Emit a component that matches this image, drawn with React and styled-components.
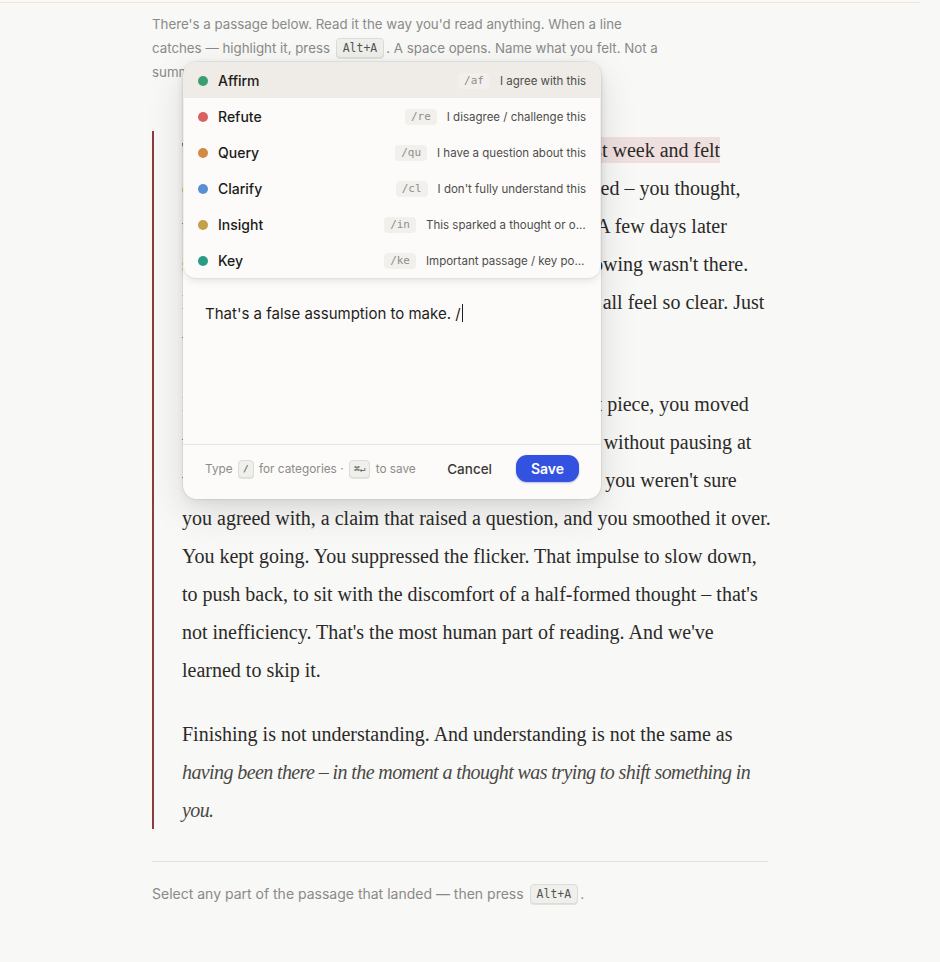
import React from "react";
import styled, { createGlobalStyle } from "styled-components";

const GlobalStyle = createGlobalStyle`
  html, body {
    margin: 0;
    padding: 0;
    background: #f8f8f6;
  }
  body {
    font-family: Inter, "Noto Sans", sans-serif;
    -webkit-font-smoothing: antialiased;
  }
`;

const categories = [
  { name: "Affirm", code: "/af", desc: "I agree with this", color: "#3b9e6f" },
  { name: "Refute", code: "/re", desc: "I disagree / challenge this", color: "#d9625f" },
  { name: "Query", code: "/qu", desc: "I have a question about this", color: "#d08c46" },
  { name: "Clarify", code: "/cl", desc: "I don't fully understand this", color: "#5b8fd5" },
  { name: "Insight", code: "/in", desc: "This sparked a thought or observation", color: "#c4a04b" },
  { name: "Key", code: "/ke", desc: "Important passage / key point", color: "#2c9a89" },
];

const Shell = styled.div`
  padding-right: 20px;
`;

const TopRule = styled.div`
  height: 1px;
  margin-top: 2px;
  background: #f4e2d5;
`;

const Page = styled.main`
  position: relative;
  max-width: 616px;
  margin: 0 auto;
  padding: 9px 12px 60px;
`;

const Intro = styled.p`
  margin: 0;
  max-width: 510px;
  font-size: 13.3px;
  line-height: 24px;
  color: #8a8a88;
`;

const Kbd = styled.kbd`
  display: inline-block;
  font-family: "DejaVu Sans Mono", "Liberation Mono", monospace;
  font-size: ${(p) => (p.$small ? "9.5px" : "11.5px")};
  line-height: ${(p) => (p.$small ? "16px" : "18px")};
  padding: 0 ${(p) => (p.$small ? "4px" : "6px")};
  margin: 0 2px;
  color: #555;
  background: #efefec;
  border: 1px solid #dcdcd8;
  border-radius: 4px;
  box-shadow: 0 1px 0 #e2e2de;
  vertical-align: 1px;
`;

/* the passage is typeset line by line, so each paragraph keeps its breaks */
const Passage = styled.article`
  margin-top: 47px;
  padding-left: 28px;
  border-left: 2px solid #8e3b3b;
  font-family: "Liberation Serif", "Times New Roman", serif;
  font-size: 20px;
  line-height: 38px;
  color: #2b2a28;
`;

const Para = styled.p`
  margin: 0 0 26px;
  white-space: nowrap;
  &:last-child {
    margin-bottom: 0;
  }
`;

const Marked = styled.span`
  background: #efe0df;
  padding: 2px 0;
`;

const Aside = styled.em`
  color: #4a4845;
  letter-spacing: -0.6px;
`;

const Divider = styled.hr`
  margin: 32px 0 0;
  border: 0;
  border-top: 1px solid #e3e3e0;
`;

const Footnote = styled.p`
  margin: 20px 0 0;
  font-size: 14px;
  line-height: 24px;
  color: #8a8a88;
`;

/* annotation popover */

const Popover = styled.div`
  position: absolute;
  top: 59px;
  left: 43px;
  width: 418px;
  background: #fcfbf9;
  border-radius: 14px;
  box-shadow: 0 0 0 1px rgba(0, 0, 0, 0.05), 0 12px 36px rgba(0, 0, 0, 0.13),
    0 3px 8px rgba(0, 0, 0, 0.05);
  z-index: 10;
`;

const Excerpt = styled.blockquote`
  margin: 0;
  height: 220px;
  padding: 18px 22px;
  box-sizing: border-box;
  font-family: "Liberation Serif", serif;
  font-style: italic;
  font-size: 15px;
  color: #777;
`;

const Menu = styled.ul`
  position: absolute;
  top: 0;
  left: 1px;
  right: 1px;
  margin: 0;
  padding: 0;
  list-style: none;
  background: #fcfbf9;
  border-radius: 12px;
  overflow: hidden;
  box-shadow: 0 3px 8px rgba(0, 0, 0, 0.09), 0 1px 2px rgba(0, 0, 0, 0.06);
`;

const MenuItem = styled.li`
  display: flex;
  align-items: center;
  height: 36px;
  padding: 1px 14px 0;
  box-sizing: border-box;
  background: ${(p) => (p.$active ? "#efebe6" : "transparent")};
`;

const Dot = styled.span`
  width: 10px;
  height: 10px;
  border-radius: 50%;
  background: ${(p) => p.$color};
  flex-shrink: 0;
`;

const ItemName = styled.span`
  margin-left: 10px;
  font-size: 14px;
  font-weight: 500;
  color: #1b1b1a;
`;

const ItemCode = styled.code`
  margin-left: auto;
  font-family: "DejaVu Sans Mono", "Liberation Mono", monospace;
  font-size: 11px;
  line-height: 16px;
  padding: 0 6px;
  color: #8f8e8a;
  background: #f2f0ec;
  border-radius: 4px;
`;

const ItemDesc = styled.span`
  margin-left: 10px;
  max-width: 160px;
  white-space: nowrap;
  overflow: hidden;
  text-overflow: ellipsis;
  font-size: 11.5px;
  color: #4e4d4a;
`;

const Editor = styled.div`
  height: 162px;
  padding: 21px 22px;
  box-sizing: border-box;
  font-size: 15px;
  line-height: 22px;
  color: #1e1e1d;
`;

const Caret = styled.span`
  display: inline-block;
  width: 1px;
  height: 18px;
  margin-left: 1px;
  background: #1e1e1d;
  vertical-align: -3px;
`;

const Footer = styled.div`
  display: flex;
  align-items: center;
  padding: 10px 22px 17px;
  border-top: 1px solid #e7e5e1;
`;

const Hint = styled.span`
  font-size: 11.8px;
  color: #8c8b88;
  margin-right: auto;
`;

const CancelButton = styled.button`
  border: 0;
  background: none;
  font-family: inherit;
  font-size: 13.5px;
  font-weight: 500;
  color: #3a3a38;
  padding: 0;
  margin-right: 24px;
  cursor: pointer;
`;

const SaveButton = styled.button`
  border: 0;
  height: 27px;
  width: 63px;
  border-radius: 11px;
  background: #3452e0;
  color: #fff;
  font-family: inherit;
  font-size: 14px;
  font-weight: 600;
  box-shadow: 0 1px 2px rgba(30, 50, 160, 0.3);
  cursor: pointer;
`;

export default function App() {
  return (
    <Shell>
      <GlobalStyle />
      <TopRule />
      <Page>
        <Intro>
          There's a passage below. Read it the way you'd read anything. When a line
          catches — highlight it, press <Kbd>Alt+A</Kbd>. A space opens. Name what you felt. Not a
          summary. Just the first honest reaction.
        </Intro>

        <Passage>
          <Para>
            Think of the last piece you read that you <Marked>finished last week and felt</Marked>
            <br />
            certain you knew it. The argument was clean, it landed – you thought,
            <br />
            this will stay with me. It all made sense at the time. A few days later
            <br />
            someone asked what it was really about, and the knowing wasn't there.
            <br />
            Not the argument, not the details – not what made it all feel so clear. Just
            <br />
            the faint memory of having agreed.
          </Para>
          <Para>
            It isn't that you read carelessly. When you got to that piece, you moved
            <br />
            through it the way we've all been taught to: steadily, without pausing at
            <br />
            the hard parts. There was a line near the middle, one you weren't sure
            <br />
            you agreed with, a claim that raised a question, and you smoothed it over.
            <br />
            You kept going. You suppressed the flicker. That impulse to slow down,
            <br />
            to push back, to sit with the discomfort of a half-formed thought – that's
            <br />
            not inefficiency. That's the most human part of reading. And we've
            <br />
            learned to skip it.
          </Para>
          <Para>
            Finishing is not understanding. And understanding is not the same as
            <br />
            <Aside>
              having been there – in the moment a thought was trying to shift something in
              <br />
              you.
            </Aside>
          </Para>
        </Passage>

        <Divider />
        <Footnote>
          Select any part of the passage that landed — then press <Kbd>Alt+A</Kbd>.
        </Footnote>

        <Popover>
          <Excerpt>“finished last week and felt”</Excerpt>
          <Menu>
            {categories.map((c, i) => (
              <MenuItem key={c.code} $active={i === 0}>
                <Dot $color={c.color} />
                <ItemName>{c.name}</ItemName>
                <ItemCode>{c.code}</ItemCode>
                <ItemDesc>{c.desc}</ItemDesc>
              </MenuItem>
            ))}
          </Menu>
          <Editor>
            That's a false assumption to make. /<Caret />
          </Editor>
          <Footer>
            <Hint>
              Type <Kbd $small>/</Kbd> for categories · <Kbd $small>⌘↵</Kbd> to save
            </Hint>
            <CancelButton>Cancel</CancelButton>
            <SaveButton>Save</SaveButton>
          </Footer>
        </Popover>
      </Page>
    </Shell>
  );
}
